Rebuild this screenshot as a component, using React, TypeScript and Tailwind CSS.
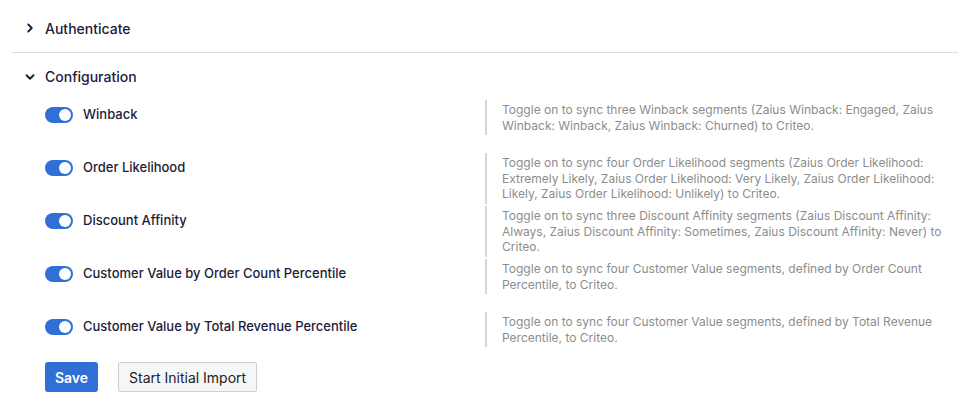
import React, { useState } from "react";
import { ChevronDown, ChevronRight } from "lucide-react";

interface SegmentOption {
  id: string;
  label: string;
  description: string;
}

const segmentOptions: SegmentOption[] = [
  {
    id: "winback",
    label: "Winback",
    description:
      "Toggle on to sync three Winback segments (Zaius Winback: Engaged, Zaius Winback: Winback, Zaius Winback: Churned) to Criteo.",
  },
  {
    id: "order_likelihood",
    label: "Order Likelihood",
    description:
      "Toggle on to sync four Order Likelihood segments (Zaius Order Likelihood: Extremely Likely, Zaius Order Likelihood: Very Likely, Zaius Order Likelihood: Likely, Zaius Order Likelihood: Unlikely) to Criteo.",
  },
  {
    id: "discount_affinity",
    label: "Discount Affinity",
    description:
      "Toggle on to sync three Discount Affinity segments (Zaius Discount Affinity: Always, Zaius Discount Affinity: Sometimes, Zaius Discount Affinity: Never) to Criteo.",
  },
  {
    id: "cv_order_count",
    label: "Customer Value by Order Count Percentile",
    description:
      "Toggle on to sync four Customer Value segments, defined by Order Count Percentile, to Criteo.",
  },
  {
    id: "cv_total_revenue",
    label: "Customer Value by Total Revenue Percentile",
    description:
      "Toggle on to sync four Customer Value segments, defined by Total Revenue Percentile, to Criteo.",
  },
];

function Toggle({ on, onClick }: { on: boolean; onClick: () => void }) {
  return (
    <button
      type="button"
      onClick={onClick}
      className={`relative w-[28px] h-[16px] rounded-full shrink-0 ${
        on ? "bg-[#2f6fd6]" : "bg-[#c4c4c4]"
      }`}
    >
      <span
        className={`absolute top-[2px] w-[12px] h-[12px] rounded-full bg-white ${
          on ? "left-[14px]" : "left-[2px]"
        }`}
      />
    </button>
  );
}

export default function App() {
  const [authOpen, setAuthOpen] = useState(false);
  const [configOpen, setConfigOpen] = useState(true);
  const [toggles, setToggles] = useState<Record<string, boolean>>(
    Object.fromEntries(segmentOptions.map((s) => [s.id, true]))
  );

  return (
    <div
      className="w-[964px] h-[405px] bg-white pl-3 pr-[6px] text-[#1c1c3a] overflow-hidden"
      style={{ fontFamily: "Inter, 'Noto Sans', sans-serif" }}
    >
      {/* Authenticate */}
      <div className="border-b border-[#dcdcdc] pt-[5px] h-[53px]">
        <button
          type="button"
          onClick={() => setAuthOpen((p) => !p)}
          className="flex items-center h-[46px] pl-[11px] gap-[8px]"
        >
          {authOpen ? (
            <ChevronDown size={14} strokeWidth={3.2} />
          ) : (
            <ChevronRight size={14} strokeWidth={3.2} />
          )}
          <span className="text-[14px] font-medium">Authenticate</span>
        </button>
      </div>

      {/* Configuration */}
      <div>
        <button
          type="button"
          onClick={() => setConfigOpen((p) => !p)}
          className="flex items-center h-[47px] pl-[11px] gap-[8px]"
        >
          {configOpen ? (
            <ChevronDown size={14} strokeWidth={3.2} />
          ) : (
            <ChevronRight size={14} strokeWidth={3.2} />
          )}
          <span className="text-[14px] font-medium">Configuration</span>
        </button>

        {configOpen && (
          <div className="pl-[33px]">
            <div className="flex flex-col">
              {segmentOptions.map((opt) => (
                <div key={opt.id} className="flex min-h-[53px] last:min-h-0">
                  <div className="w-[440px] flex items-center gap-[10px] h-[28px] pt-[1px]">
                    <Toggle
                      on={toggles[opt.id]}
                      onClick={() =>
                        setToggles((prev) => ({ ...prev, [opt.id]: !prev[opt.id] }))
                      }
                    />
                    <span className="text-[13px] font-medium">{opt.label}</span>
                  </div>
                  <div className="flex-1 self-start border-l-2 border-[#d6d6d6] pl-[15px] pr-[14px] py-[2px] text-[12px] leading-[15.5px] text-[#8d8d8d]">
                    {opt.description}
                  </div>
                </div>
              ))}
            </div>

            {/* 버튼 */}
            <div className="flex gap-[20px] mt-[15px]">
              <button
                type="button"
                className="h-[30px] w-[53px] rounded-[3px] bg-[#2f6fd6] text-white text-[14px] font-semibold"
              >
                Save
              </button>
              <button
                type="button"
                className="h-[30px] px-[10px] rounded-[2px] border border-[#cfcfcf] bg-[#f5f6f7] text-[14px] text-[#222]"
              >
                Start Initial Import
              </button>
            </div>
          </div>
        )}
      </div>
    </div>
  );
}
